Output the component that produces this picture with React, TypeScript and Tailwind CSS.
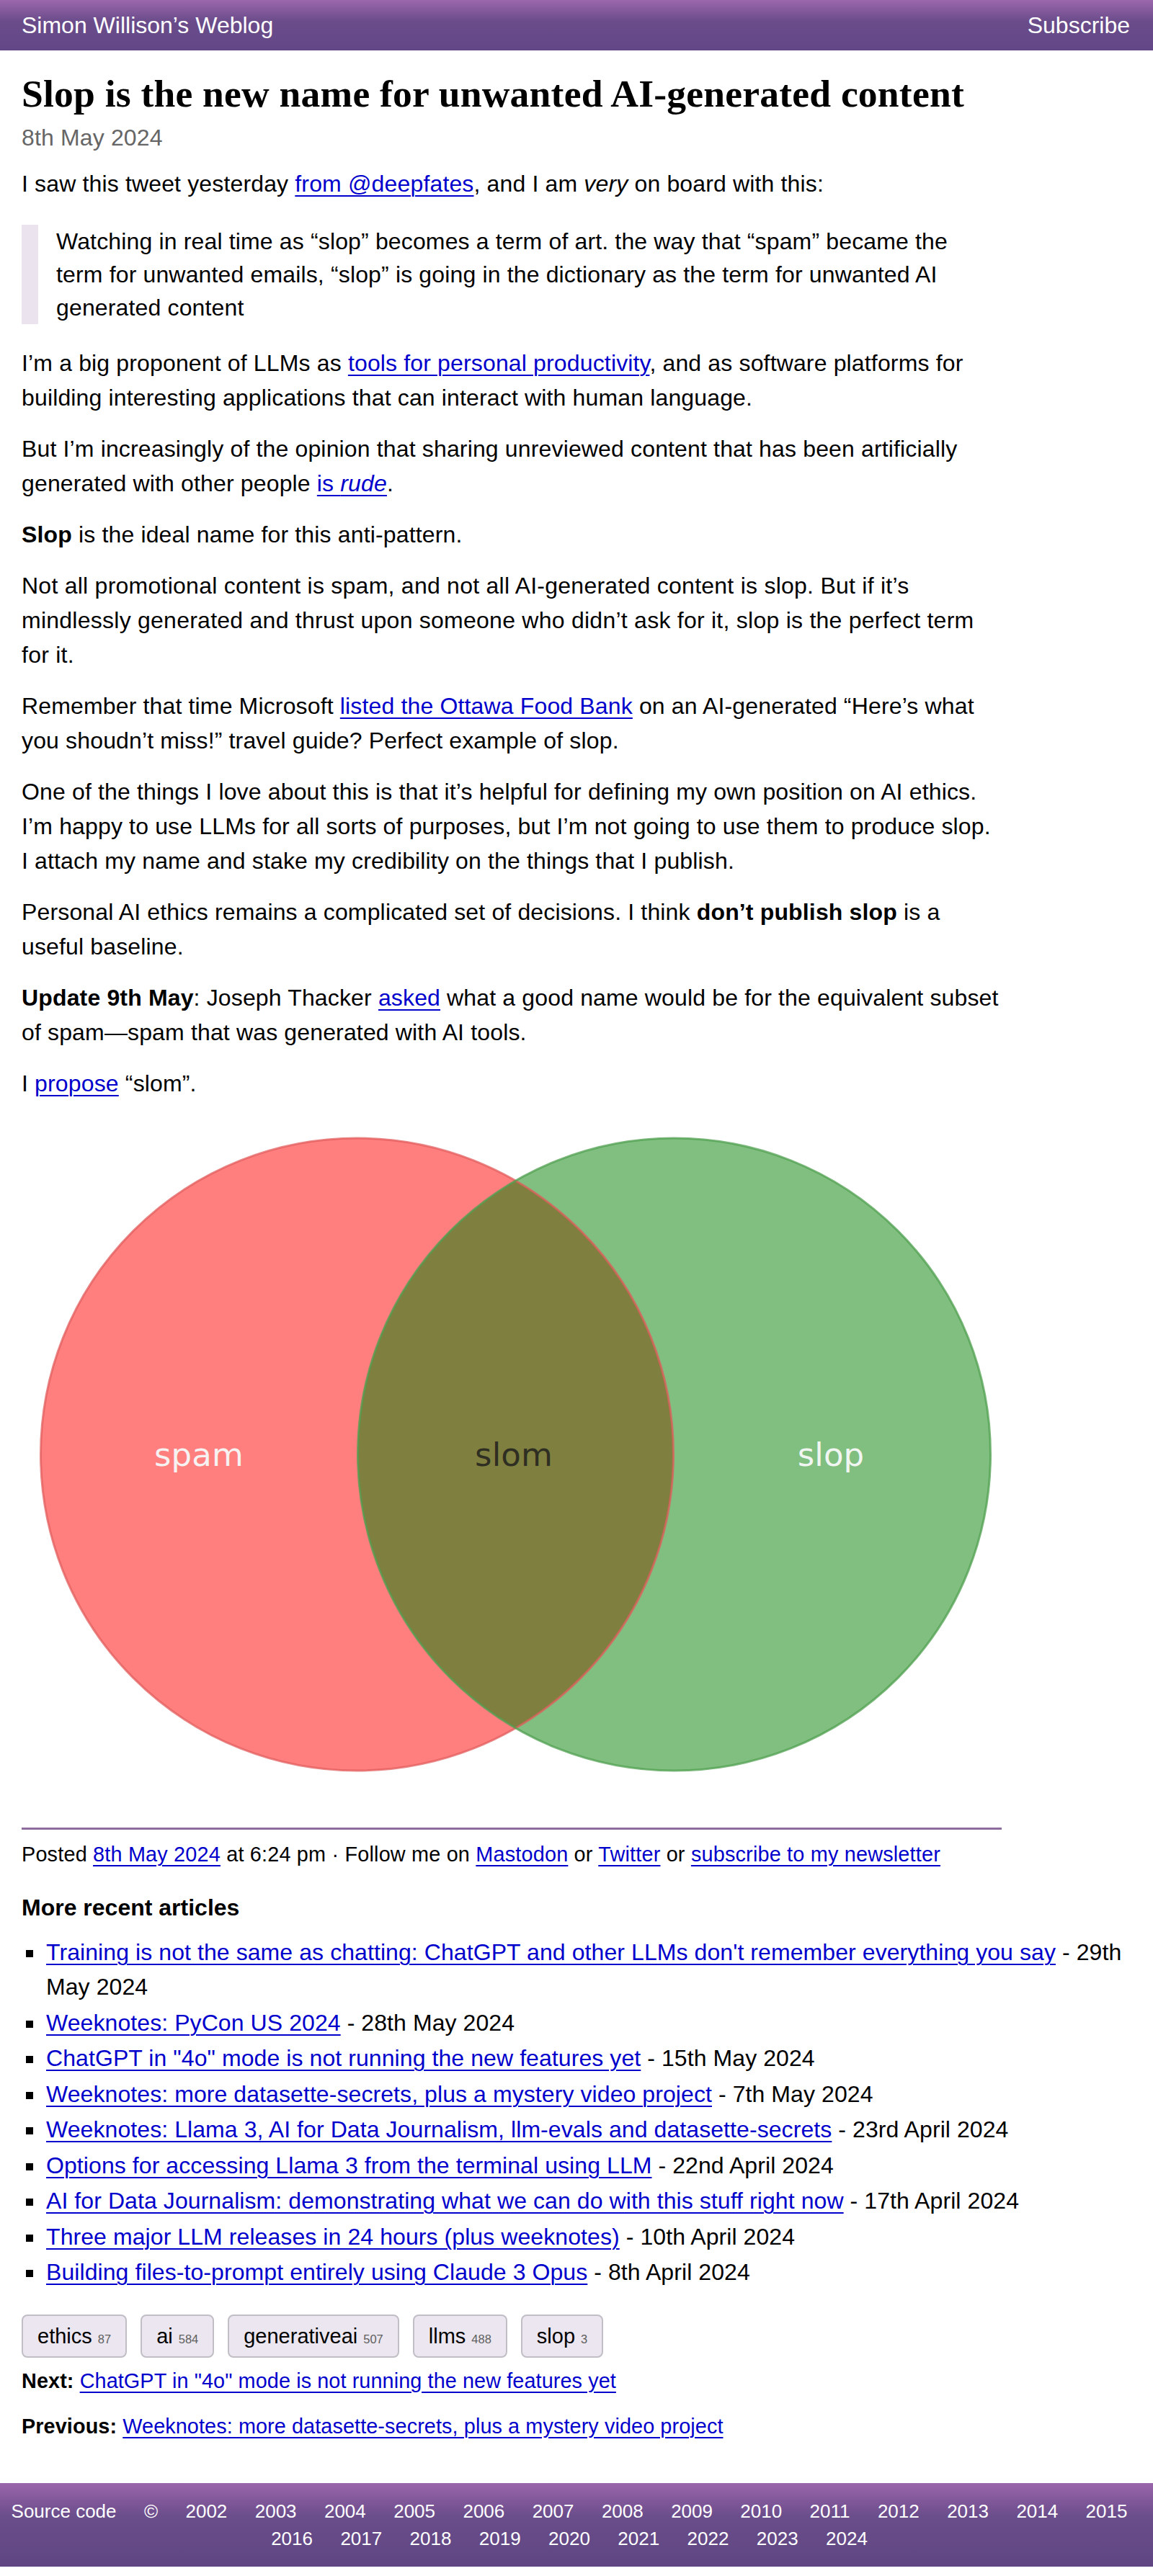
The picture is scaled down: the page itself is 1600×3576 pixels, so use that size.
import React from 'react';

const link = 'text-[#0000cc] underline decoration-2 underline-offset-[5px]';

const recent = [
  { title: "Training is not the same as chatting: ChatGPT and other LLMs don't remember everything you say", date: '29th May 2024' },
  { title: 'Weeknotes: PyCon US 2024', date: '28th May 2024' },
  { title: 'ChatGPT in "4o" mode is not running the new features yet', date: '15th May 2024' },
  { title: 'Weeknotes: more datasette-secrets, plus a mystery video project', date: '7th May 2024' },
  { title: 'Weeknotes: Llama 3, AI for Data Journalism, llm-evals and datasette-secrets', date: '23rd April 2024' },
  { title: 'Options for accessing Llama 3 from the terminal using LLM', date: '22nd April 2024' },
  { title: 'AI for Data Journalism: demonstrating what we can do with this stuff right now', date: '17th April 2024' },
  { title: 'Three major LLM releases in 24 hours (plus weeknotes)', date: '10th April 2024' },
  { title: 'Building files-to-prompt entirely using Claude 3 Opus', date: '8th April 2024' },
];

const tags = [
  { name: 'ethics', count: 87 },
  { name: 'ai', count: 584 },
  { name: 'generativeai', count: 507 },
  { name: 'llms', count: 488 },
  { name: 'slop', count: 3 },
];

const years = Array.from({ length: 23 }, (_, i) => 2002 + i);

// venn diagram, coordinates relative to the svg box
const Venn = () => (
  <svg width="1360" height="960" viewBox="0 0 1360 960" className="block mt-[22px]">
    <defs>
      <clipPath id="redClip">
        <circle cx="465.5" cy="469" r="439" />
      </clipPath>
    </defs>
    <circle cx="465.5" cy="469" r="439" fill="#ff7f7f" />
    <circle cx="905.5" cy="469" r="439" fill="#80bf80" />
    <circle cx="905.5" cy="469" r="439" fill="#7f7f3f" clipPath="url(#redClip)" />
    <circle cx="465.5" cy="469" r="439" fill="none" stroke="#e25c5c" strokeWidth="3" strokeOpacity="0.75" />
    <circle cx="905.5" cy="469" r="439" fill="none" stroke="#4f9f4f" strokeWidth="3" strokeOpacity="0.75" />
    <g fontFamily="'DejaVu Sans', sans-serif" fontSize="45" textAnchor="middle" dominantBaseline="central">
      <text x="246" y="469" fill="#f6f2f2">spam</text>
      <text x="683" y="469" fill="#2e2e22">slom</text>
      <text x="1123" y="469" fill="#f2f6f2">slop</text>
    </g>
  </svg>
);

export default function App() {
  return (
    <div className="min-h-[3576px] bg-white text-black font-['Liberation_Sans',Arial,Helvetica,sans-serif]">
      <header className="h-[70px] flex items-center justify-between pl-[30px] pr-[32px] text-white text-[32px] bg-[linear-gradient(to_bottom,#9b67ad_0%,#6b4c8b_42%,#624786_100%)]">
        <a href="#">Simon Willison’s Weblog</a>
        <a href="#">Subscribe</a>
      </header>

      <main className="px-[30px] flex flex-col">
        <div className="w-[1360px] flex flex-col text-[32px] leading-[48px] tracking-[0.15px]">
          <h1 className="mt-[28px] font-['Liberation_Serif',Georgia,serif] font-bold text-[53.6px] leading-[65px] tracking-[0.2px]">
            Slop is the new name for unwanted AI-generated content
          </h1>
          <p className="mt-[4px] text-[#666]">8th May 2024</p>

          <p className="mt-[16px]">
            I saw this tweet yesterday <a href="#" className={link}>from @deepfates</a>, and I am <em>very</em> on board with this:
          </p>

          <blockquote className="mt-[33px] mr-[40px] border-l-[23px] border-[#ebe3ee] pl-[25px] leading-[46px]">
            Watching in real time as “slop” becomes a term of art. the way that “spam” became the term for unwanted emails,
            “slop” is going in the dictionary as the term for unwanted AI generated content
          </blockquote>

          <p className="mt-[30px]">
            I’m a big proponent of LLMs as <a href="#" className={link}>tools for personal productivity</a>, and as software
            platforms for building interesting applications that can interact with human language.
          </p>
          <p className="mt-[23px]">
            But I’m increasingly of the opinion that sharing unreviewed content that has been artificially generated with other
            people <a href="#" className={link}>is <em>rude</em></a>.
          </p>
          <p className="mt-[23px]">
            <strong>Slop</strong> is the ideal name for this anti-pattern.
          </p>
          <p className="mt-[23px] tracking-[0.25px]">
            Not all promotional content is spam, and not all AI-generated content is slop. But if it’s mindlessly generated and
            thrust upon someone who didn’t ask for it, slop is the perfect term for it.
          </p>
          <p className="mt-[23px]">
            Remember that time Microsoft <a href="#" className={link}>listed the Ottawa Food Bank</a> on an AI-generated “Here’s
            what you shoudn’t miss!” travel guide? Perfect example of slop.
          </p>
          <p className="mt-[23px]">
            One of the things I love about this is that it’s helpful for defining my own position on AI ethics. I’m happy to use
            LLMs for all sorts of purposes, but I’m not going to use them to produce slop. I attach my name and stake my
            credibility on the things that I publish.
          </p>
          <p className="mt-[23px]">
            Personal AI ethics remains a complicated set of decisions. I think <strong>don’t publish slop</strong> is a useful
            baseline.
          </p>
          <p className="mt-[23px]">
            <strong>Update 9th May</strong>: Joseph Thacker <a href="#" className={link}>asked</a> what a good name would be for
            the equivalent subset of spam—spam that was generated with AI tools.
          </p>
          <p className="mt-[23px]">
            I <a href="#" className={link}>propose</a> “slom”.
          </p>

          <Venn />

          <div className="mt-[27px] border-t-[3px] border-[#8c6d9e]" />
          <p className="mt-[13px] text-[28.8px] leading-[43px] tracking-[0.2px]">
            Posted <a href="#" className={link}>8th May 2024</a> at 6:24 pm · Follow me on{' '}
            <a href="#" className={link}>Mastodon</a> or <a href="#" className={link}>Twitter</a> or{' '}
            <a href="#" className={link}>subscribe to my newsletter</a>
          </p>
        </div>

        <h3 className="mt-[28px] text-[32px] leading-[48px] font-bold">More recent articles</h3>
        <ul className="mt-[14px] list-[square] pl-[32px] text-[32px] leading-[48px] tracking-[0.08px]">
          {recent.map((r) => (
            <li key={r.title} className="mb-[1.5px] pl-[2px]">
              <a href="#" className={link}>{r.title}</a> - {r.date}
            </li>
          ))}
        </ul>

        <div className="mt-[33px] flex gap-[19px]">
          {tags.map((t) => (
            <a
              key={t.name}
              href="#"
              className="flex items-baseline h-[60px] px-[20px] py-[6px] border-2 border-[#c2bec6] rounded-[8px] bg-[#ebe6ef] text-[29px] leading-[44px] text-black"
            >
              {t.name}
              <span className="ml-[8px] text-[16.5px] text-[#5e5e5e]">{t.count}</span>
            </a>
          ))}
        </div>

        <p className="mt-[11px] text-[28.8px] leading-[43px] tracking-[0.1px]">
          <strong>Next:</strong> <a href="#" className={link}>ChatGPT in "4o" mode is not running the new features yet</a>
        </p>
        <p className="mt-[20px] text-[28.8px] leading-[43px] tracking-[0.1px]">
          <strong>Previous:</strong>{' '}
          <a href="#" className={link}>Weeknotes: more datasette-secrets, plus a mystery video project</a>
        </p>
      </main>

      <footer className="mt-[57px] py-[20px] pl-[10px] pr-[30px] flex flex-wrap justify-center gap-x-[38.4px] text-white text-[26px] leading-[38px] bg-[linear-gradient(to_bottom,#9a65ab_0%,#6a4d8b_40%,#5f4683_100%)]">
        <a href="#">Source code</a>
        <span>©</span>
        {years.map((y) => (
          <a key={y} href="#">{y}</a>
        ))}
      </footer>
    </div>
  );
}
